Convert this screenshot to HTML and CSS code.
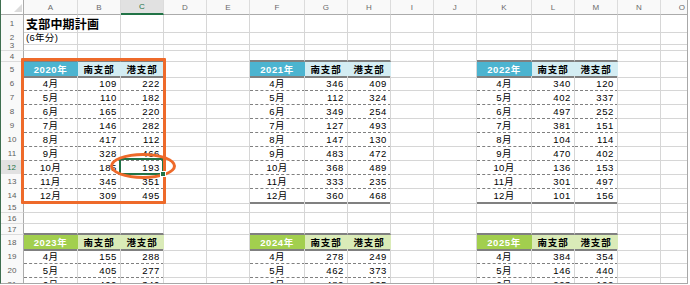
FILE: index.html
```html
<!DOCTYPE html>
<html>
<head>
    <meta charset="utf-8">
    <title>支部中期計画</title>
    <link rel="stylesheet" href="styles.css">
</head>
<body>
    <div class="sheet">
        <div class="row cols">
            <div class="corner"><svg width="8" height="8" viewBox="0 0 8 8"><polygon points="8,0 8,8 0,8" fill="#dcdcdc"/></svg></div>
            <div>A</div><div>B</div><div class="sel">C</div><div>D</div><div>E</div><div>F</div><div>G</div><div>H</div><div>I</div><div>J</div><div>K</div><div>L</div><div>M</div><div>N</div><div>O</div>
        </div>

        <div class="row r-title">
            <div class="hd">1</div><div class="title">支部中期計画</div>
            <div></div><div></div><div></div><div></div><div></div><div></div><div></div><div></div><div></div><div></div><div></div><div></div><div></div><div></div>
        </div>
        <div class="row r-blank">
            <div class="hd">2</div><div class="note">(6年分)</div>
            <div></div><div></div><div></div><div></div><div></div><div></div><div></div><div></div><div></div><div></div><div></div><div></div><div></div><div></div>
        </div>
        <div class="row r-blank short">
            <div class="hd">3</div>
            <div></div><div></div><div></div><div></div><div></div><div></div><div></div><div></div><div></div><div></div><div></div><div></div><div></div><div></div><div></div>
        </div>
        <div class="row r-blank top">
            <div class="hd">4</div>
            <div class="t"></div><div class="t"></div><div class="t"></div><div></div><div></div>
            <div class="t"></div><div class="t"></div><div class="t"></div><div></div><div></div>
            <div class="t"></div><div class="t"></div><div class="t"></div><div></div><div></div>
        </div>

        <!-- 2020 / 2021 / 2022 -->
        <div class="row head">
            <div class="hd">5</div>
            <div class="yr">2020年</div><div class="sub">南支部</div><div class="sub">港支部</div><div></div><div></div>
            <div class="yr">2021年</div><div class="sub">南支部</div><div class="sub">港支部</div><div></div><div></div>
            <div class="yr">2022年</div><div class="sub">南支部</div><div class="sub">港支部</div><div></div><div></div>
        </div>
        <div class="row">
            <div class="hd">6</div>
            <div class="m">4月</div><div class="n">109</div><div class="n">222</div><div></div><div></div>
            <div class="m">4月</div><div class="n">346</div><div class="n">409</div><div></div><div></div>
            <div class="m">4月</div><div class="n">340</div><div class="n">120</div><div></div><div></div>
        </div>
        <div class="row">
            <div class="hd">7</div>
            <div class="m">5月</div><div class="n">110</div><div class="n">182</div><div></div><div></div>
            <div class="m">5月</div><div class="n">112</div><div class="n">324</div><div></div><div></div>
            <div class="m">5月</div><div class="n">402</div><div class="n">337</div><div></div><div></div>
        </div>
        <div class="row">
            <div class="hd">8</div>
            <div class="m">6月</div><div class="n">165</div><div class="n">220</div><div></div><div></div>
            <div class="m">6月</div><div class="n">349</div><div class="n">254</div><div></div><div></div>
            <div class="m">6月</div><div class="n">497</div><div class="n">252</div><div></div><div></div>
        </div>
        <div class="row">
            <div class="hd">9</div>
            <div class="m">7月</div><div class="n">146</div><div class="n">282</div><div></div><div></div>
            <div class="m">7月</div><div class="n">127</div><div class="n">493</div><div></div><div></div>
            <div class="m">7月</div><div class="n">381</div><div class="n">151</div><div></div><div></div>
        </div>
        <div class="row">
            <div class="hd">10</div>
            <div class="m">8月</div><div class="n">417</div><div class="n">112</div><div></div><div></div>
            <div class="m">8月</div><div class="n">147</div><div class="n">130</div><div></div><div></div>
            <div class="m">8月</div><div class="n">104</div><div class="n">114</div><div></div><div></div>
        </div>
        <div class="row">
            <div class="hd">11</div>
            <div class="m">9月</div><div class="n">328</div><div class="n">466</div><div></div><div></div>
            <div class="m">9月</div><div class="n">483</div><div class="n">472</div><div></div><div></div>
            <div class="m">9月</div><div class="n">470</div><div class="n">402</div><div></div><div></div>
        </div>
        <div class="row">
            <div class="hd sel">12</div>
            <div class="m">10月</div><div class="n">185</div><div class="n cur">193</div><div></div><div></div>
            <div class="m">10月</div><div class="n">368</div><div class="n">489</div><div></div><div></div>
            <div class="m">10月</div><div class="n">136</div><div class="n">153</div><div></div><div></div>
        </div>
        <div class="row">
            <div class="hd">13</div>
            <div class="m">11月</div><div class="n">345</div><div class="n">351</div><div></div><div></div>
            <div class="m">11月</div><div class="n">333</div><div class="n">235</div><div></div><div></div>
            <div class="m">11月</div><div class="n">301</div><div class="n">497</div><div></div><div></div>
        </div>
        <div class="row end">
            <div class="hd">14</div>
            <div class="m">12月</div><div class="n">309</div><div class="n">495</div><div></div><div></div>
            <div class="m">12月</div><div class="n">360</div><div class="n">468</div><div></div><div></div>
            <div class="m">12月</div><div class="n">101</div><div class="n">156</div><div></div><div></div>
        </div>

        <div class="row r-blank">
            <div class="hd">15</div>
            <div></div><div></div><div></div><div></div><div></div><div></div><div></div><div></div><div></div><div></div><div></div><div></div><div></div><div></div><div></div>
        </div>
        <div class="row r-blank">
            <div class="hd">16</div>
            <div></div><div></div><div></div><div></div><div></div><div></div><div></div><div></div><div></div><div></div><div></div><div></div><div></div><div></div><div></div>
        </div>
        <div class="row r-blank top">
            <div class="hd">17</div>
            <div class="t"></div><div class="t"></div><div class="t"></div><div></div><div></div>
            <div class="t"></div><div class="t"></div><div class="t"></div><div></div><div></div>
            <div class="t"></div><div class="t"></div><div class="t"></div><div></div><div></div>
        </div>

        <!-- 2023 / 2024 / 2025 -->
        <div class="row head green">
            <div class="hd">18</div>
            <div class="yr">2023年</div><div class="sub">南支部</div><div class="sub">港支部</div><div></div><div></div>
            <div class="yr">2024年</div><div class="sub">南支部</div><div class="sub">港支部</div><div></div><div></div>
            <div class="yr">2025年</div><div class="sub">南支部</div><div class="sub">港支部</div><div></div><div></div>
        </div>
        <div class="row">
            <div class="hd">19</div>
            <div class="m">4月</div><div class="n">155</div><div class="n">288</div><div></div><div></div>
            <div class="m">4月</div><div class="n">278</div><div class="n">249</div><div></div><div></div>
            <div class="m">4月</div><div class="n">384</div><div class="n">354</div><div></div><div></div>
        </div>
        <div class="row">
            <div class="hd">20</div>
            <div class="m">5月</div><div class="n">405</div><div class="n">277</div><div></div><div></div>
            <div class="m">5月</div><div class="n">462</div><div class="n">373</div><div></div><div></div>
            <div class="m">5月</div><div class="n">146</div><div class="n">440</div><div></div><div></div>
        </div>
        <div class="row">
            <div class="hd">21</div>
            <div class="m">6月</div><div class="n">400</div><div class="n">340</div><div></div><div></div>
            <div class="m">6月</div><div class="n">482</div><div class="n">225</div><div></div><div></div>
            <div class="m">6月</div><div class="n">223</div><div class="n">192</div><div></div><div></div>
        </div>

        <!-- annotations drawn over the sheet -->
        <div class="mark"></div>
        <div class="ring"></div>
    </div>
</body>
</html>
```

FILE: styles.css
```css
body {
    margin: 0;
    overflow: hidden;
    background: #fff;
    font-family: "Liberation Sans", "Noto Sans CJK JP", sans-serif;
}
.sheet {
    position: relative;
    width: 688px;
    height: 284px;
    box-sizing: border-box;
    overflow: hidden;
    border-left: 1px solid #3f6f50;
    border-right: 1px solid #a8a8a8;
    border-bottom: 1px solid #a8a8a8;
}
.row {
    display: grid;
    grid-template-columns: 23px 54px 43px 43px 43px 43px 55px 43px 43px 43px 43px 55px 43px 43px 43px 43px;
    height: 14px;
}
.row > div {
    box-sizing: border-box;
    display: flex;
    align-items: center;
    border-right: 1px solid #d6d6d6;
    border-bottom: 1px solid #d6d6d6;
    font-size: 9.5px;
    letter-spacing: 0.3px;
    white-space: nowrap;
    color: #000;
}
.r-title {
    height: 15px;
}
.r-blank {
    height: 11px;
}
.r-blank.short {
    height: 10px;
}

/* column letters */
.cols {
    height: 15px;
}
.cols > div {
    justify-content: center;
    background: #f9f9f9;
    border-right-color: #dcdcdc;
    border-bottom-color: #ababab;
    font-size: 8px;
    color: #6b6b6b;
}
.cols > .sel {
    background: #e1e1e1;
    border-bottom: 2px solid #217346;
    color: #217346;
}
.cols > .corner {
    align-items: flex-end;
    justify-content: flex-end;
    padding: 0 1px 2px 0;
    background: #fff;
    border-right-color: #ababab;
}

/* row numbers */
.row > .hd {
    justify-content: center;
    background: #f9f9f9;
    border-right-color: #ababab;
    border-bottom-color: #dcdcdc;
    font-size: 8px;
    letter-spacing: 0;
    color: #5d5d5d;
}
.row > .hd.sel {
    background: #e1e1e1;
    border-right: 2px solid #217346;
    color: #217346;
}

.row > .title {
    padding-left: 2px;
    font-size: 12px;
    font-weight: bold;
    letter-spacing: 0.2px;
}
.row > .note {
    padding-left: 2px;
    font-size: 9.5px;
}

/* tables */
.top > .t {
    border-bottom: 2px solid #808080;
}
.row > .yr,
.row > .sub {
    justify-content: center;
    font-weight: bold;
    border-right-color: transparent;
    border-bottom: 2px solid #808080;
}
.row > .yr {
    background: #4cb4d0;
    color: #fff;
    letter-spacing: 0.6px;
}
.row > .sub {
    background: #d4edf3;
    letter-spacing: 0.8px;
}
.green > .yr {
    background: #a2cf4e;
}
.green > .sub {
    background: #daebb8;
}
.row > .m {
    justify-content: center;
    border-bottom: 1px dashed #808080;
}
.row > .n {
    justify-content: flex-end;
    padding-right: 3px;
    letter-spacing: 0.6px;
    border-bottom: 1px dashed #808080;
}
.end > .m,
.end > .n {
    border-bottom: 2px solid #808080;
}

/* active cell */
.row > .cur {
    position: relative;
}
.cur::after {
    content: "";
    position: absolute;
    top: -2px;
    left: -2px;
    right: -1px;
    bottom: -1px;
    border: 2px solid #217346;
}
.cur::before {
    content: "";
    position: absolute;
    right: -3px;
    bottom: -3px;
    width: 4px;
    height: 4px;
    background: #217346;
    border: 1px solid #fff;
    z-index: 1;
}

/* orange callouts */
.mark {
    position: absolute;
    left: 20px;
    top: 58px;
    width: 145px;
    height: 146px;
    box-sizing: border-box;
    border: 3px solid #ee6a2a;
    border-radius: 1px;
}
.ring {
    position: absolute;
    left: 109px;
    top: 153px;
    width: 66px;
    height: 26px;
    box-sizing: border-box;
    border: 3px solid #ee6a2a;
    border-radius: 50%;
}
```
